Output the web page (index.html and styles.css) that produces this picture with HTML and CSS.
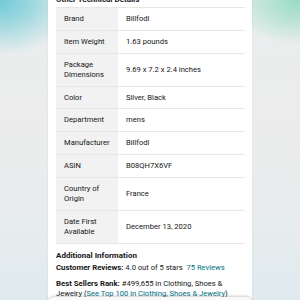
FILE: index.html
```html
<!DOCTYPE html>
<html>
<head>
<meta charset="utf-8">
<link rel="stylesheet" href="styles.css">
</head>
<body>
<div class="page">
  <div class="card">
    <h2 class="title">Other Technical Details</h2>
    <table class="specs">
      <tr><th>Brand</th><td>Billfodl</td></tr>
      <tr><th>Item Weight</th><td>1.63 pounds</td></tr>
      <tr class="tall"><th>Package Dimensions</th><td>9.69 x 7.2 x 2.4 inches</td></tr>
      <tr><th>Color</th><td>Silver, Black</td></tr>
      <tr><th>Department</th><td>mens</td></tr>
      <tr><th>Manufacturer</th><td>Billfodl</td></tr>
      <tr><th>ASIN</th><td>B08QH7X6VF</td></tr>
      <tr class="tall"><th>Country of Origin</th><td>France</td></tr>
      <tr class="tall"><th>Date First Available</th><td>December 13, 2020</td></tr>
    </table>
    <h3 class="sub">Additional Information</h3>
    <p class="info"><b>Customer Reviews:</b> 4.0 out of 5 stars&nbsp; <a class="link" href="#">75 Reviews</a></p>
    <p class="info"><b>Best Sellers Rank:</b> #499,655 in Clothing, Shoes &amp; Jewelry (<a class="link" href="#">See Top 100 in Clothing, Shoes &amp; Jewelry</a>)</p>
  </div>
  <div class="sheet"></div>
</div>
</body>
</html>
```
FILE: styles.css
```css
html, body {
  margin: 0;
  padding: 0;
  width: 300px;
  height: 300px;
  overflow: hidden;
}
body {
  font-family: "Roboto", "Liberation Sans", sans-serif;
  color: #161616;
  background:
    radial-gradient(ellipse 75px 55px at 0 0, #6fcad6 0%, rgba(111,202,214,0.6) 45%, rgba(111,202,214,0) 100%),
    radial-gradient(ellipse 70px 45px at 300px 0, #98dbc4 0%, rgba(152,219,196,0.6) 45%, rgba(152,219,196,0) 100%),
    linear-gradient(to bottom, #e9eeee 0%, #ececec 40%, #e6ecee 80%, #dfeaef 100%);
}
.page {
  position: relative;
  height: 300px;
  display: flex;
  justify-content: center;
}
.card {
  width: 189px;
  background: #fff;
  padding: 0 7px 0 8px;
  box-shadow: 0 0 2px rgba(0,0,0,0.08);
}
.title {
  font-size: 8px;
  font-weight: 700;
  line-height: 10px;
  margin: -5px 0 2px;
}
.specs {
  width: 189px;
  border-collapse: collapse;
  border-top: 1px solid #e7e7e7;
  font-size: 7.6px;
  line-height: 10px;
}
.specs th, .specs td {
  text-align: left;
  vertical-align: middle;
  font-weight: 400;
  height: 10px;
  padding: 6px 8px 5.8px;
  border-bottom: 1px solid #e7e7e7;
}
.specs .tall th, .specs .tall td {
  padding: 6px 8px 6px;
}
.specs th {
  width: 46px;
  background: #f2f2f2;
}
.sub {
  font-size: 8px;
  font-weight: 700;
  line-height: 10px;
  margin: 7px 0 2px;
}
.info {
  font-size: 7.6px;
  line-height: 10px;
  margin: 0 0 6px;
}
.info b {
  font-weight: 700;
  font-size: 7.8px;
}
.link {
  color: #007185;
  text-decoration: none;
}
.sheet {
  position: absolute;
  left: 48px;
  top: 297px;
  width: 204px;
  height: 20px;
  background: #fafafa;
  border-radius: 6px 6px 0 0;
  box-shadow: 0 -1px 3px rgba(0,0,0,0.2);
}
```
